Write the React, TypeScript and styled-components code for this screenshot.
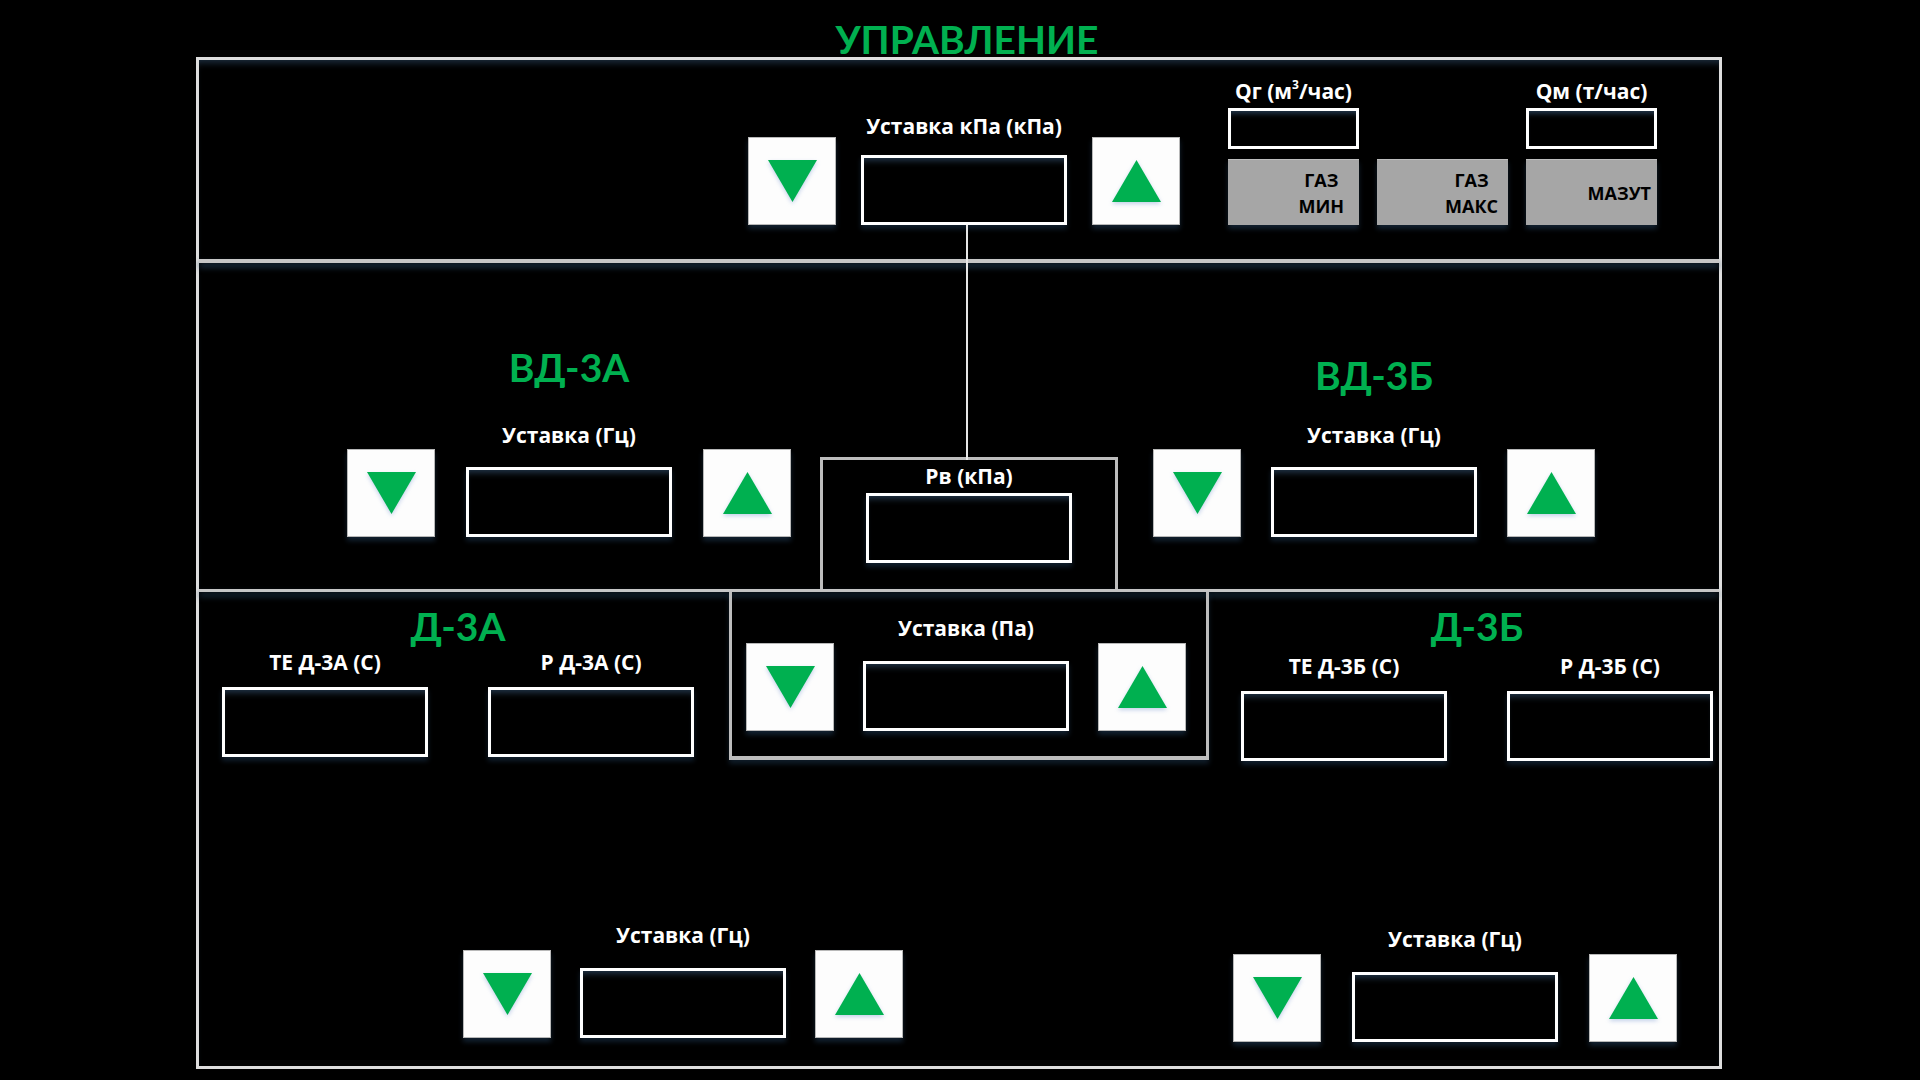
import React from "react";
import styled, { createGlobalStyle } from "styled-components";

const GREEN = "#00b050";

const GlobalStyle = createGlobalStyle`
  html, body {
    margin: 0;
    padding: 0;
    background: #000;
  }
  body {
    font-family: Lato, "Open Sans", "Liberation Sans", sans-serif;
  }
`;

type Dir = "up" | "down";

const Triangle: React.FC<{ dir: Dir }> = ({ dir }) => (
  <Arrow width="49" height="42" viewBox="0 0 49 42">
    <polygon
      points={dir === "down" ? "0,0 49,0 24.5,42" : "24.5,0 49,42 0,42"}
      fill={GREEN}
    />
  </Arrow>
);

const ArrowButton: React.FC<{ dir: Dir }> = ({ dir }) => (
  <StepButton type="button">
    <Triangle dir={dir} />
  </StepButton>
);

type ControlProps = {
  label: string;
  gap?: number;
  labelGap?: number;
};

const Control: React.FC<ControlProps> = ({ label, gap = 29, labelGap = 20 }) => (
  <ControlRow $gap={gap}>
    <ArrowButton dir="down" />
    <Field $gap={labelGap}>
      <Label>{label}</Label>
      <ValueBox />
    </Field>
    <ArrowButton dir="up" />
  </ControlRow>
);

type ProbeProps = {
  title: string;
  te: string;
  p: string;
  headGap: number;
};

const ProbeGroup: React.FC<ProbeProps> = ({ title, te, p, headGap }) => (
  <Probe>
    <Heading $mb={headGap}>{title}</Heading>
    <ProbeFields>
      <Field $gap={13}>
        <Label>{te}</Label>
        <ValueBox />
      </Field>
      <Field $gap={13}>
        <Label>{p}</Label>
        <ValueBox />
      </Field>
    </ProbeFields>
  </Probe>
);

export default function App() {
  return (
    <>
      <GlobalStyle />
      <Screen>
        <Title>УПРАВЛЕНИЕ</Title>
        <Frame>
          <TopSection>
            <Control label="Уставка кПа (кПа)" gap={25} labelGap={17} />
            <FuelPanel>
              <FuelLabel $col={1}>
                Qг (м<sup>3</sup>/час)
              </FuelLabel>
              <FuelLabel $col={3}>Qм (т/час)</FuelLabel>
              <FlowBox $col={1} />
              <FlowBox $col={3} />
              <ModeButton type="button" $pr={15}>
                ГАЗ
                <br />
                МИН
              </ModeButton>
              <ModeButton type="button" $pr={10}>
                ГАЗ
                <br />
                МАКС
              </ModeButton>
              <ModeButton type="button" $pr={6}>
                МАЗУТ
              </ModeButton>
            </FuelPanel>
          </TopSection>

          <Divider $h={4} />

          <MiddleSection>
            <FanGroup>
              <Heading $mb={36}>ВД-3А</Heading>
              <Control label="Уставка (Гц)" gap={31} />
            </FanGroup>
            <PressurePanel>
              <Label>Рв (кПа)</Label>
              <ValueBox />
            </PressurePanel>
            <FanGroup $ml={35}>
              <Heading $mb={28}>ВД-3Б</Heading>
              <Control label="Уставка (Гц)" gap={30} />
            </FanGroup>
          </MiddleSection>

          <Divider $h={3} />

          <BottomSection>
            <ProbeRow>
              <ProbeGroup title="Д-3А" te="ТЕ Д-3А (С)" p="Р Д-3А (С)" headGap={4} />
              <SetpointPanel>
                <Control label="Уставка (Па)" gap={29} labelGap={21} />
              </SetpointPanel>
              <ProbeGroup title="Д-3Б" te="ТЕ Д-3Б (С)" p="Р Д-3Б (С)" headGap={8} />
            </ProbeRow>
            <DriveRow>
              <DriveSlot $mb={28}>
                <Control label="Уставка (Гц)" gap={29} labelGap={21} />
              </DriveSlot>
              <DriveSlot $mb={24} $ml={330}>
                <Control label="Уставка (Гц)" gap={31} labelGap={21} />
              </DriveSlot>
            </DriveRow>
          </BottomSection>
        </Frame>
      </Screen>
    </>
  );
}

const Screen = styled.div`
  width: 1920px;
  height: 1080px;
  background: #000;
  padding-left: 196px;
  box-sizing: border-box;
  overflow: hidden;
`;

const Title = styled.h1`
  width: 1526px;
  height: 57px;
  margin: 0;
  padding: 22px 0 0 16px;
  box-sizing: border-box;
  text-align: center;
  font-size: 39px;
  line-height: 35px;
  font-weight: 700;
  color: ${GREEN};
`;

const Frame = styled.div`
  position: relative;
  width: 1526px;
  height: 1012px;
  box-sizing: border-box;
  border: 3px solid #dedede;
  box-shadow: inset 0 7px 7px -4px rgba(40, 64, 88, 0.7);
  display: flex;
  flex-direction: column;
`;

const TopSection = styled.div`
  height: 199px;
  flex-shrink: 0;
  box-sizing: border-box;
  padding: 0 0 34px 549px;
  display: flex;
  align-items: flex-end;
`;

const Divider = styled.div<{ $h: number }>`
  height: ${(p) => p.$h}px;
  flex-shrink: 0;
  background: #c6c6c6;
  box-shadow: 0 4px 6px rgba(38, 70, 100, 0.85);
`;

const MiddleSection = styled.div`
  height: 326px;
  flex-shrink: 0;
  box-sizing: border-box;
  padding-left: 148px;
  display: flex;
  align-items: flex-end;
`;

const BottomSection = styled.div`
  flex: 1;
  display: flex;
  flex-direction: column;
  padding-left: 23px;
`;

const ControlRow = styled.div<{ $gap: number }>`
  display: flex;
  align-items: flex-end;
  gap: ${(p) => p.$gap}px;
`;

const Field = styled.div<{ $gap: number }>`
  display: flex;
  flex-direction: column;
  align-items: center;
  gap: ${(p) => p.$gap}px;
`;

const Label = styled.div`
  font-family: "Open Sans", "Noto Sans", sans-serif;
  font-size: 21px;
  line-height: 24px;
  font-weight: 700;
  color: #fff;
  white-space: nowrap;
  text-align: center;

  sup {
    font-size: 12px;
    line-height: 0;
    vertical-align: 10px;
  }
`;

const ValueBox = styled.div`
  width: 206px;
  height: 70px;
  box-sizing: border-box;
  border: 3px solid #fff;
  background: #000;
  box-shadow: inset 0 7px 6px -4px rgba(40, 64, 88, 0.8),
    0 4px 5px rgba(30, 55, 80, 0.55);
`;

const StepButton = styled.button`
  width: 88px;
  height: 88px;
  padding: 0;
  border: 1px solid #b8b8b8;
  background: #fdfdfd;
  display: flex;
  align-items: center;
  justify-content: center;
  box-shadow: 0 4px 5px rgba(30, 55, 80, 0.6);
  cursor: pointer;
`;

const Arrow = styled.svg`
  display: block;
  filter: drop-shadow(0 2px 2px rgba(90, 130, 200, 0.35));
`;

const FuelPanel = styled.div`
  margin-left: 48px;
  display: grid;
  grid-template-columns: repeat(3, 131px);
  column-gap: 18px;
`;

const FuelLabel = styled(Label)<{ $col: number }>`
  grid-row: 1;
  grid-column: ${(p) => p.$col};
`;

const FlowBox = styled.div<{ $col: number }>`
  grid-row: 2;
  grid-column: ${(p) => p.$col};
  margin-top: 5px;
  height: 41px;
  box-sizing: border-box;
  border: 3px solid #fff;
  background: #000;
  box-shadow: inset 0 6px 5px -3px rgba(40, 64, 88, 0.8);
`;

const ModeButton = styled.button<{ $pr: number }>`
  grid-row: 3;
  margin-top: 10px;
  height: 66px;
  padding: 0 ${(p) => p.$pr}px 0 0;
  border: none;
  border-top: 1px solid #bdbdbd;
  background: #a6a6a6;
  display: flex;
  align-items: center;
  justify-content: flex-end;
  text-align: center;
  font-family: "Open Sans", "Noto Sans", sans-serif;
  font-size: 18px;
  line-height: 26px;
  font-weight: 700;
  color: #000;
  box-shadow: 0 4px 5px rgba(30, 55, 80, 0.6);
`;

const Heading = styled.div<{ $mb: number }>`
  margin-bottom: ${(p) => p.$mb}px;
  font-size: 39px;
  line-height: 40px;
  font-weight: 700;
  color: ${GREEN};
  white-space: nowrap;
`;

const FanGroup = styled.div<{ $ml?: number }>`
  margin-left: ${(p) => p.$ml ?? 0}px;
  margin-bottom: 52px;
  display: flex;
  flex-direction: column;
  align-items: center;
`;

const PressurePanel = styled.div`
  position: relative;
  margin-left: 29px;
  width: 298px;
  height: 132px;
  box-sizing: border-box;
  border: 3px solid #bdbdbd;
  border-bottom: none;
  padding-top: 4px;
  display: flex;
  flex-direction: column;
  align-items: center;
  gap: 5px;

  &::before {
    content: "";
    position: absolute;
    left: calc(50% - 3px);
    bottom: 100%;
    width: 2px;
    height: 235px;
    background: #e6e6e6;
  }
`;

const ProbeRow = styled.div`
  display: flex;
  align-items: flex-start;
`;

const Probe = styled.div`
  margin-top: 14px;
  display: flex;
  flex-direction: column;
  align-items: center;
`;

const ProbeFields = styled.div`
  display: flex;
  gap: 60px;
`;

const SetpointPanel = styled.div`
  margin: 0 32px 0 35px;
  width: 480px;
  height: 168px;
  box-sizing: border-box;
  border: 3px solid #bdbdbd;
  border-top: none;
  border-bottom-width: 4px;
  padding: 24px 0 0 14px;
  box-shadow: 0 4px 5px rgba(30, 55, 80, 0.5);
`;

const DriveRow = styled.div`
  margin-top: auto;
  display: flex;
  align-items: flex-end;
  padding-left: 241px;
`;

const DriveSlot = styled.div<{ $mb: number; $ml?: number }>`
  margin-bottom: ${(p) => p.$mb}px;
  margin-left: ${(p) => p.$ml ?? 0}px;
`;
